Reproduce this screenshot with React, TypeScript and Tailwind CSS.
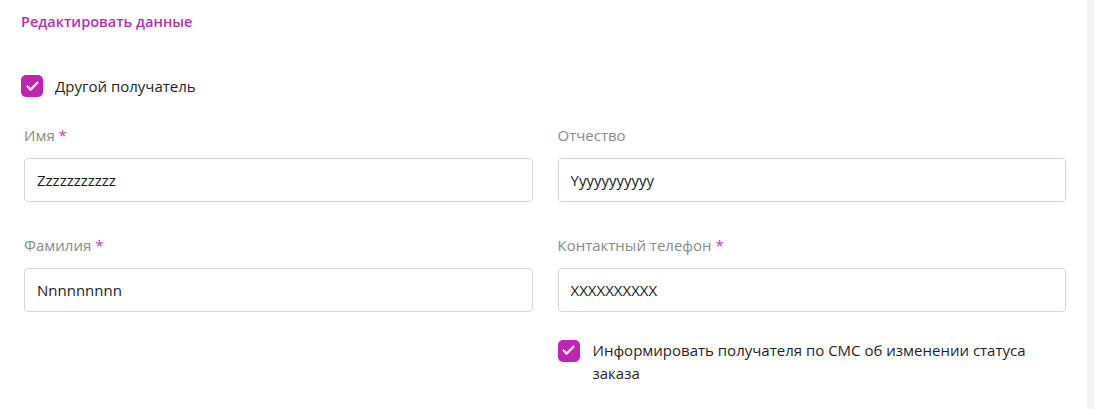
import { Check } from "lucide-react";

interface FieldProps {
  label: string;
  value: string;
  required?: boolean;
}

const Field = ({ label, value, required }: FieldProps) => (
  <div className="flex flex-col">
    <label className="text-[15px] leading-5 text-[#8a8a8a]">
      {label}
      {required && <span className="text-[#c03cb4]"> *</span>}
    </label>
    <input
      readOnly
      value={value}
      className="mt-[13px] h-[44px] w-full rounded-[4px] border border-[#d6d6d6] bg-white px-[12px] text-[15px] text-[#1a1a1a] outline-none"
    />
  </div>
);

const CheckMark = () => (
  <span className="flex h-[22px] w-[22px] shrink-0 items-center justify-center rounded-[5px] bg-[#c024b2]">
    <Check className="h-[15px] w-[15px] text-white" strokeWidth={3.4} />
  </span>
);

export default function App() {
  return (
    <div
      className="flex h-[409px] w-[1094px] bg-white"
      style={{ fontFamily: '"Open Sans", "Noto Sans", sans-serif' }}
    >
      <div className="flex-1 pl-[21px] pr-[21px] pt-[12px]">
        <h2 className="text-[14.5px] font-semibold leading-5 text-[#b82fae]">
          Редактировать данные
        </h2>

        <div className="mt-[43px] flex items-center gap-[12px]">
          <CheckMark />
          <span className="text-[15px] text-[#1f1f1f]">Другой получатель</span>
        </div>

        <div className="ml-[3px] mt-[27px] grid grid-cols-2 gap-x-[25px] gap-y-[33px]">
          <Field label="Имя" value="Zzzzzzzzzzz" required />
          <Field label="Отчество" value="Yyyyyyyyyyy" />
          <Field label="Фамилия" value="Nnnnnnnnn" required />
          <Field label="Контактный телефон" value="XXXXXXXXXX" required />
          <div />
          <div className="mt-[-5px] flex items-start gap-[13px]">
            <CheckMark />
            <span className="mt-[-1px] text-[15px] leading-[23px] text-[#1f1f1f]">
              Информировать получателя по СМС об изменении статуса заказа
            </span>
          </div>
        </div>
      </div>
      <div className="w-[7px] bg-[#f4f4f4]" />
    </div>
  );
}
